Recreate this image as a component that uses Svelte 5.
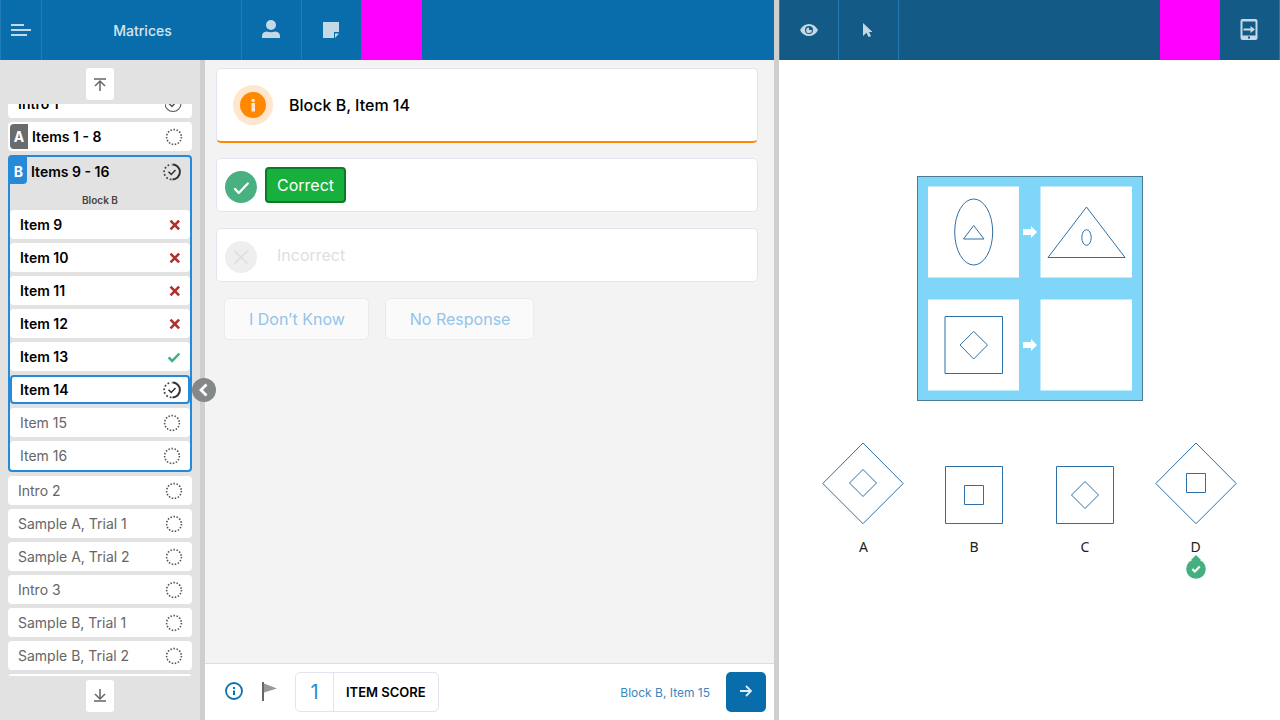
<script>
  import { onMount } from 'svelte';

  const items = [
    { label: 'Item 9', state: 'wrong' },
    { label: 'Item 10', state: 'wrong' },
    { label: 'Item 11', state: 'wrong' },
    { label: 'Item 12', state: 'wrong' },
    { label: 'Item 13', state: 'right' },
    { label: 'Item 14', state: 'progress', current: true },
    { label: 'Item 15', state: 'empty' },
    { label: 'Item 16', state: 'empty' }
  ];
  const rest = ['Intro 2', 'Sample A, Trial 1', 'Sample A, Trial 2', 'Intro 3', 'Sample B, Trial 1', 'Sample B, Trial 2', ''];
  const options = [
    { label: 'A', outer: 'diamond', inner: 'diamond' },
    { label: 'B', outer: 'square', inner: 'square' },
    { label: 'C', outer: 'square', inner: 'diamond' },
    { label: 'D', outer: 'diamond', inner: 'square', chosen: true }
  ];

  let list = $state();
  onMount(() => {
    list.scrollTop = 15;
  });
</script>

{#snippet status(state)}
  {#if state === 'wrong'}
    <svg class="mark" width="18" height="18" viewBox="0 0 18 18"><path d="M7.500 4.700l8.600 8.600M16.100 4.700l-8.600 8.600" stroke="#b03030" stroke-width="2.600" /></svg>
  {:else if state === 'right'}
    <svg class="mark" width="18" height="18" viewBox="0 0 18 18"><path d="M5.600 9.300l3.600 3.600L16.400 5.500" stroke="#42b07f" stroke-width="2.500" /></svg>
  {:else if state === 'done'}
    <svg class="mark" width="18" height="18" viewBox="0 0 18 18"><circle cx="8" cy="8.500" r="8" stroke="#555" stroke-width="1.100" /><path d="M4 8.500l3 3 5-5.500" stroke="#555" stroke-width="1.500" /></svg>
  {:else if state === 'progress'}
    <svg class="mark" width="18" height="18" viewBox="0 0 18 18"><path d="M9.500 1.600a7.300 7.300 0 0 1 0 14.800" stroke="#333" stroke-width="2" /><path d="M8.500 16.400A7.400 7.400 0 0 1 8.500 1.600" stroke="#444" stroke-width="1.700" stroke-dasharray="1.800 2" /><path d="M5.500 8.800l2.700 2.600L12.500 7" stroke="#333" stroke-width="1.500" /></svg>
  {:else}
    <svg class="mark" width="18" height="18" viewBox="0 0 18 18"><circle cx="9" cy="9" r="7.400" stroke="#555" stroke-width="1.600" stroke-dasharray="1.500 1.600" /></svg>
  {/if}
{/snippet}

<div class="app">
  <section class="pane">
    <header class="bar">
      <button class="tool menu" aria-label="Menu"><svg width="20" height="14" viewBox="0 0 20 14"><path d="M0 2h13M0 7h20M0 12h16" stroke="#c5d8e6" stroke-width="2" fill="none" /></svg></button>
      <h1>Matrices</h1>
      <button class="tool" aria-label="Examinee"><svg width="20" height="20" viewBox="0 0 20 20" fill="#c5d8e6"><circle cx="10" cy="5" r="5" /><path d="M1 18v-2c0-3 2-4 4.500-4.500q4.500 1.500 9 0C17 12 19 13 19 16v2z" /></svg></button>
      <button class="tool" aria-label="Notes"><svg width="20" height="20" viewBox="0 0 20 20" fill="#c5d8e6"><path d="M2 2h16v10h-5v6H2z" /><path d="M14 13.500h4L14 18z" /></svg></button>
      <span class="swatch"></span>
    </header>

    <div class="work">
      <nav>
        <button class="jump" aria-label="First"><svg width="14" height="14" viewBox="0 0 14 14"><path d="M1 2h12M7 14V4M2 9l5-5 5 5" stroke="#666" stroke-width="1.500" fill="none" /></svg></button>
        <ul class="list" bind:this={list}>
          <li><button class="row strong"><span>Intro 1</span>{@render status('done')}</button></li>
          <li><button class="row strong tagged"><b class="tag">A</b><span>Items 1 - 8</span>{@render status('empty')}</button></li>
          <li class="group">
            <button class="head"><b class="tag blue">B</b><span>Items 9 - 16</span>{@render status('progress')}</button>
            <p>Block B</p>
            <ul>
              {#each items as item}
                <li><button class="row" class:strong={item.state !== 'empty'} class:current={item.current}><span>{item.label}</span>{@render status(item.state)}</button></li>
              {/each}
            </ul>
          </li>
          {#each rest as label}
            <li><button class="row"><span>{label}</span>{@render status('empty')}</button></li>
          {/each}
        </ul>
        <button class="jump" aria-label="Last"><svg width="14" height="14" viewBox="0 0 14 14"><path d="M1 12h12M7 0v10M2 5l5 5 5-5" stroke="#666" stroke-width="1.500" fill="none" /></svg></button>
      </nav>
      <div class="divider">
        <button class="collapse" aria-label="Collapse"><svg width="24" height="24" viewBox="0 0 24 24"><path d="M14.500 6.500L9 12l5.500 5.500" stroke="#fff" stroke-width="2.800" fill="none" /></svg></button>
      </div>

      <main>
        <div class="content">
          <div class="card title">
            <svg width="40" height="40" viewBox="0 0 40 40"><circle cx="20" cy="20" r="20" fill="#ffe6cc" /><circle cx="20" cy="20" r="13" fill="#ff8800" /><path d="M18.500 18h3.500v8.500h-3.500z" fill="#ffe6cc" /><circle cx="20.200" cy="15.500" r="1.800" fill="#ffe6cc" /></svg>
            <h2>Block B, Item 14</h2>
          </div>
          <div class="card answer">
            <svg width="32" height="32" viewBox="0 0 32 32"><circle cx="16" cy="16" r="16" fill="#48b081" /><path d="M10 18l3.800 4 9-9.500" stroke="#fff" stroke-width="2.300" fill="none" stroke-linecap="round" stroke-linejoin="round" /></svg>
            <button class="choice on">Correct</button>
          </div>
          <div class="card answer">
            <svg width="32" height="32" viewBox="0 0 32 32"><circle cx="16" cy="16" r="16" fill="#eee" /><path d="M9.500 10l13 12.500M22.500 10l-13 12.500" stroke="#dedede" stroke-width="1.600" fill="none" /></svg>
            <button class="choice">Incorrect</button>
          </div>
          <div class="others">
            <button>I Don’t Know</button>
            <button>No Response</button>
          </div>
        </div>
        <footer>
          <div class="aids">
            <button aria-label="Information"><svg width="20" height="20" viewBox="0 0 20 20"><circle cx="10" cy="9" r="8" fill="none" stroke="#0b73b0" stroke-width="1.800" /><path d="M9 8.500h2V13H9zM9 5h2v2H9z" fill="#0b73b0" /></svg></button>
            <button aria-label="Flag"><svg width="15" height="20" viewBox="0 0 15 20"><path d="M1 0v19" stroke="#666" stroke-width="2" /><path d="M2 1.500l13 5L2 10.500z" fill="#999" /></svg></button>
            <div class="score"><output>1</output><strong>ITEM SCORE</strong></div>
          </div>
          <span class="upcoming">Block B, Item 15</span>
          <button class="next" aria-label="Next"><svg width="14" height="14" viewBox="0 0 14 14"><path d="M1 6h11M7 1l5 5-5 5" stroke="#e2eef6" stroke-width="1.800" fill="none" /></svg></button>
        </footer>
      </main>
    </div>
  </section>

  <div class="divider"></div>

  <section class="pane">
    <header class="bar dark">
      <button class="tool first" aria-label="Preview"><svg width="18" height="12" viewBox="0 0 18 12"><path fill="#c5d8e6" fill-rule="evenodd" d="M0 6C2 2 5.500 0 9 0s7 2 9 6c-2 4-5.500 6-9 6S2 10 0 6zm9-4a4 4 0 1 0 0 8 4 4 0 0 0 0-8z" /><path fill="#c5d8e6" d="M9 3.500V6h2.800A2.800 2.800 0 1 1 9 3.500z" /></svg></button>
      <button class="tool" aria-label="Pointer"><svg width="10" height="16" viewBox="0 0 10 16"><path fill="#c5d8e6" d="M0 1l9.500 9H6l2 4.200L5.500 15l-2-4.200L0 14z" /></svg></button>
      <span class="swatch far"></span>
      <button class="tool" aria-label="Send to device"><svg width="18" height="22" viewBox="0 0 18 22"><path fill="#c5d8e6" fill-rule="evenodd" d="M2.500 0h13A2 2 0 0 1 17.500 2v17a2 2 0 0 1-2 2h-13a2 2 0 0 1-2-2V2a2 2 0 0 1 2-2zM2.500 2.500v14h13v-14zM8 17.500v2h2v-2z" /><path fill="#c5d8e6" d="M3.500 9.500h7V7l4.500 3.500-4.500 3.500v-2.500h-7z" /></svg></button>
    </header>

    <div class="stimulus">
      <svg class="matrix" width="226" height="225" viewBox="0 0 226 225" role="img" aria-label="Matrix">
        <rect x=".5" y=".5" width="225" height="224" fill="#80d6f8" stroke="#4c7c91" />
        <path d="M11 10.500h91V101.500H11zM123.500 10.500H215v91h-91.500zM11 123.500h91v91H11zM123.500 123.500H215v91h-91.500z" fill="#fff" />
        <g fill="#fff"><path id="arrow" d="M106 53h8v-3l6 6-6 6v-3h-8z" /><use href="#arrow" y="113" /></g>
        <g fill="none" stroke="#2e70a5">
          <ellipse cx="56.700" cy="56" rx="19" ry="33" /><path d="M46.500 63l10.200-13.500L67 63z" />
          <path d="M131 81.500l38.500-50.500L208 81.500z" /><ellipse cx="169.500" cy="61.500" rx="4.700" ry="7.800" />
          <path d="M28 140.500h57.500v57H28zM56.700 155.500L70.500 169l-13.800 14L43 169z" />
        </g>
      </svg>
      <div class="options">
        {#each options as o}
          <button class="option">
            <svg width="82" height="82" viewBox="0 0 82 82" fill="none" stroke="#2e70a5">
              {#if o.outer === 'diamond'}<path d="M41 1L81.200 41.500 41 81.700.8 41.500z" />{:else}<path d="M12.500 24.500h57v57h-57z" />{/if}
              <g transform={o.outer === 'diamond' ? '' : 'translate(0 12)'}>
                {#if o.inner === 'diamond'}<path d="M41 27.500L54.500 41 41 54.500 27.500 41z" />{:else}<path d="M31.500 31.500h19v19h-19z" />{/if}
              </g>
            </svg>
            <span>{o.label}</span>
            {#if o.chosen}
              <svg width="20" height="24" viewBox="0 0 20 24"><path d="M10 0l5 5H5z" fill="#42b07f" /><circle cx="10" cy="14" r="9.800" fill="#42b07f" /><path d="M6.300 14l2.500 2.500 5-5" stroke="#fff" stroke-width="2" fill="none" /></svg>
            {/if}
          </button>
        {/each}
      </div>
    </div>
  </section>
</div>

<style>
  :global(body) {
    margin: 0;
  }
  .app {
    display: grid;
    grid-template-columns: 774fr 5px 501fr;
    height: 100vh;
    font-family: Inter, sans-serif;
    font-size: 14px;
    color: #000;
  }
  .app * {
    box-sizing: border-box;
  }
  button {
    font: inherit;
    color: inherit;
    background: none;
    border: 0;
    padding: 0;
    cursor: pointer;
  }
  svg {
    display: block;
    flex: none;
  }
  ul {
    list-style: none;
    margin: 0;
    padding: 0;
  }
  .pane {
    display: flex;
    flex-direction: column;
    min-width: 0;
    min-height: 0;
  }
  .bar {
    display: flex;
    flex: none;
    height: 60px;
    background: #0a6dab;
    border-left: 1px solid #1f7cb8;
  }
  .dark {
    background: #135b86;
  }
  .tool {
    display: flex;
    align-items: center;
    justify-content: center;
    width: 60px;
    padding-right: 2px;
    border-right: 1px solid #1f7cb8;
  }
  .tool.menu {
    width: 41px;
    padding: 0;
  }
  .tool.first {
    width: 59px;
    padding: 0;
  }
  h1 {
    display: flex;
    align-items: center;
    justify-content: center;
    width: 200px;
    margin: 0;
    padding-left: 2px;
    font-size: 14px;
    font-weight: 500;
    color: #d5e5f0;
    border-right: 1px solid #1f7cb8;
  }
  .swatch {
    width: 60px;
    background: #f0f;
  }
  .far {
    margin-left: auto;
  }
  .work {
    display: flex;
    flex: 1;
    min-height: 0;
  }
  nav {
    display: flex;
    flex-direction: column;
    align-items: center;
    gap: 4px;
    width: 200px;
    padding: 8px;
    background: #e2e2e2;
  }
  .jump {
    display: flex;
    align-items: center;
    justify-content: center;
    flex: none;
    width: 28px;
    height: 32px;
    background: #fff;
    border-radius: 3px;
  }
  .list {
    flex: 1;
    width: 100%;
    min-height: 0;
    overflow-y: auto;
    scrollbar-width: none;
  }
  .list > li,
  .group li {
    margin-bottom: 4px;
  }
  .row {
    display: flex;
    align-items: center;
    justify-content: space-between;
    width: 100%;
    height: 29px;
    padding: 0 9px 0 10px;
    color: #666;
    background: #fff;
    border-radius: 4px;
  }
  .strong,
  .head {
    font-weight: 600;
    color: #000;
  }
  .tagged {
    padding-left: 2px;
  }
  .tag {
    display: flex;
    align-items: center;
    justify-content: center;
    width: 18px;
    height: 25px;
    color: #fff;
    font-weight: 700;
    background: #686c6d;
    border-radius: 4px 0 0 4px;
  }
  .tagged span,
  .head span {
    margin: 0 auto 0 4px;
  }
  .group {
    border: 2px solid #258ad8;
    border-radius: 4px;
  }
  .head {
    display: flex;
    align-items: center;
    width: 100%;
    height: 29px;
    padding-right: 9px;
  }
  .blue {
    align-self: flex-start;
    width: 17px;
    height: 27px;
    padding-top: 2px;
    background: #258ad8;
    border-radius: 0 0 4px 0;
  }
  .group p {
    margin: 0;
    padding: 6px 0 2px;
    line-height: 16px;
    font-size: 10px;
    font-weight: 600;
    text-align: center;
    color: #444;
  }
  .group li:last-child {
    margin-bottom: 0;
  }
  .current {
    padding: 0 7px 0 8px;
    border: 2px solid #258ad8;
  }
  .mark {
    fill: none;
  }
  .divider {
    position: relative;
    flex: none;
    width: 5px;
    background: #cfcfcf;
  }
  .collapse {
    position: absolute;
    left: 50%;
    top: 50%;
    width: 24px;
    height: 24px;
    margin: -12px 0 0 -11px;
    border-radius: 50%;
    background: #858888;
    z-index: 1;
  }
  main {
    display: flex;
    flex: 1;
    flex-direction: column;
    min-width: 0;
    background: #f3f3f3;
  }
  .content {
    flex: 1;
    padding: 8px 16px 8px 11px;
    font-size: 16px;
  }
  .card {
    display: flex;
    align-items: center;
    margin-bottom: 16px;
    background: #fff;
    border: 1px solid #e2e5f0;
    border-radius: 5px;
  }
  .title {
    gap: 16px;
    height: 75px;
    margin-bottom: 15px;
    padding-left: 16px;
    border-bottom: 2px solid #ff8800;
  }
  h2 {
    margin: 0;
    font-size: 16px;
    font-weight: 500;
  }
  .answer {
    gap: 8px;
    height: 54px;
    padding: 0 8px;
  }
  .answer svg {
    margin-top: 4px;
  }
  .choice {
    height: 36px;
    padding: 0 10px;
    color: #dedede;
    border: 2px solid transparent;
    border-radius: 4px;
  }
  .choice.on {
    color: #fff;
    background: #18b03c;
    border-color: #0c7a26;
  }
  .others {
    display: flex;
    gap: 16px;
    padding-left: 8px;
  }
  .others button {
    height: 42px;
    padding: 0 23px 0 24px;
    color: #93c4ea;
    background: #fafafa;
    border: 1px solid #ebebeb;
    border-radius: 5px;
  }
  footer {
    display: flex;
    align-items: center;
    gap: 16px;
    height: 57px;
    padding: 0 8px 0 19px;
    background: #fff;
    border-top: 1px solid #ddd;
  }
  .aids {
    display: flex;
    align-items: center;
    gap: 18px;
  }
  .score {
    display: flex;
    align-items: stretch;
    height: 40px;
    border: 1px solid #e2e5f0;
    border-radius: 5px;
  }
  .score output {
    display: flex;
    align-items: center;
    justify-content: center;
    width: 38px;
    font-size: 20px;
    color: #258ad8;
    border-right: 1px solid #e2e5f0;
  }
  .score strong {
    display: flex;
    align-items: center;
    padding: 0 12px;
    font-size: 13px;
    font-weight: 600;
  }
  .upcoming {
    margin-left: auto;
    font-size: 12px;
    color: #3d86c0;
  }
  .next {
    display: flex;
    align-items: center;
    justify-content: center;
    width: 40px;
    height: 40px;
    background: #0a6dab;
    border-radius: 5px;
  }
  .stimulus {
    display: flex;
    flex: 1;
    flex-direction: column;
    align-items: center;
    gap: 41px;
    padding-top: 116px;
    background: #fff;
  }
  .options {
    display: grid;
    grid-template-columns: repeat(4, 1fr);
    width: 443px;
    max-width: 100%;
  }
  .option {
    display: flex;
    flex-direction: column;
    align-items: center;
    font-family: "Noto Sans", sans-serif;
    color: #222;
  }
  .option span {
    margin-top: 14px;
    line-height: 17px;
  }
</style>
